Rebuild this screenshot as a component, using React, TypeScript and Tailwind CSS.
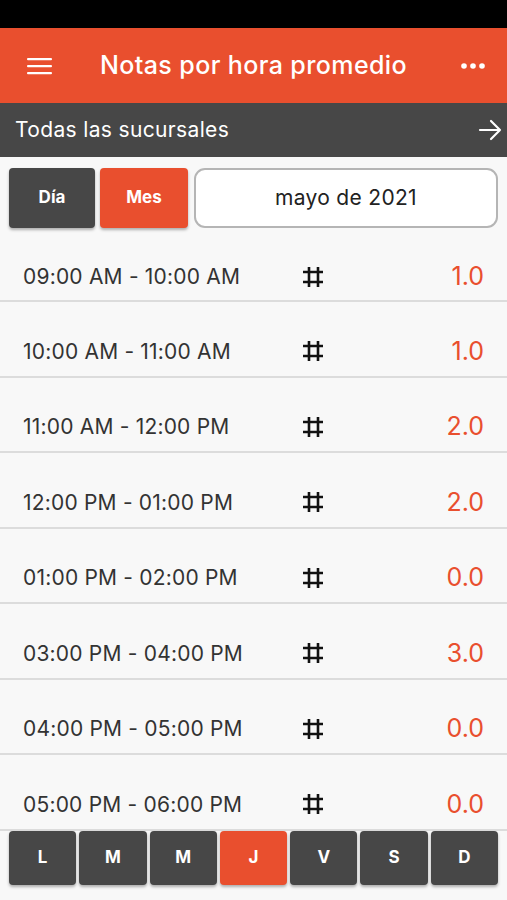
import { ReactNode } from 'react'

const rows = [
  { hora: '09:00 AM - 10:00 AM', valor: '1.0' },
  { hora: '10:00 AM - 11:00 AM', valor: '1.0' },
  { hora: '11:00 AM - 12:00 PM', valor: '2.0' },
  { hora: '12:00 PM - 01:00 PM', valor: '2.0' },
  { hora: '01:00 PM - 02:00 PM', valor: '0.0' },
  { hora: '03:00 PM - 04:00 PM', valor: '3.0' },
  { hora: '04:00 PM - 05:00 PM', valor: '0.0' },
  { hora: '05:00 PM - 06:00 PM', valor: '0.0' },
]

const dias = ['L', 'M', 'M', 'J', 'V', 'S', 'D']

function Hash() {
  return (
    <svg width="22" height="22" viewBox="0 0 22 22" fill="none" stroke="#111" strokeWidth="2.6">
      <path d="M7 1v20M16 1v20M1 6h20M1 16h20" />
    </svg>
  )
}

function Btn({ active, children, className }: { active?: boolean; children: ReactNode; className?: string }) {
  return (
    <button
      className={`flex items-center justify-center rounded-[4px] text-white font-bold shadow-[0_2px_3px_rgba(0,0,0,0.3)] ${
        active ? 'bg-[#e94f2e]' : 'bg-[#474747]'
      } ${className}`}
    >
      {children}
    </button>
  )
}

export default function App() {
  return (
    <div className="h-[900px] w-[507px] flex flex-col bg-[#f8f8f8] overflow-hidden font-['Inter',sans-serif]">
      <div className="h-[28px] bg-black shrink-0" />

      <div className="h-[75px] bg-[#e94f2e] flex items-center px-[27px] shrink-0">
        <svg width="25" height="18" viewBox="0 0 25 18" fill="#fff">
          <rect x="0" y="1" width="25" height="2.2" rx="1" />
          <rect x="0" y="8" width="25" height="2.2" rx="1" />
          <rect x="0" y="15" width="25" height="2.2" rx="1" />
        </svg>
        <h1 className="flex-1 text-center text-white text-[25px] font-medium tracking-[0.4px] pr-[5px]">
          Notas por hora promedio
        </h1>
        <svg width="26" height="8" viewBox="0 0 26 8" fill="#fff" className="mr-[-6px]">
          <circle cx="4" cy="4" r="2.8" />
          <circle cx="13" cy="4" r="2.8" />
          <circle cx="22" cy="4" r="2.8" />
        </svg>
      </div>

      <div className="h-[54px] bg-[#474747] flex items-center justify-between pl-[15px] pr-[5px] shrink-0">
        <span className="text-white text-[21px] tracking-[0.35px]">Todas las sucursales</span>
        <svg width="24" height="22" viewBox="0 0 24 22" fill="none" stroke="#fff" strokeWidth="2.2" strokeLinecap="round" strokeLinejoin="round">
          <path d="M2 11h20M13 2l9 9-9 9" />
        </svg>
      </div>

      <div className="flex gap-[5px] px-[9px] pt-[11px] shrink-0">
        <Btn className="w-[86px] h-[60px] text-[17px]">Día</Btn>
        <Btn active className="w-[88px] h-[60px] text-[17px]">Mes</Btn>
        <div className="flex-1 h-[60px] ml-[1px] rounded-[11px] border-2 border-[#b5b5b5] bg-white flex items-center justify-center text-[21px] tracking-[0.3px] text-[#222]">
          mayo de 2021
        </div>
      </div>

      <div className="flex-1 overflow-hidden">
        {rows.map((r, i) => (
          <div
            key={i}
            className={`flex items-center pt-[25px] border-b-2 border-[#dcdcdc] box-border ${i === 0 ? 'h-[74px]' : 'h-[75.5px]'}`}
          >
            <span className="w-[302px] pl-[23px] text-[21px] text-[#333] tracking-[0.2px]">{r.hora}</span>
            <Hash />
            <span className="flex-1 text-right pr-[23px] text-[25px] text-[#e94f2e]">{r.valor}</span>
          </div>
        ))}
      </div>

      <div className="flex gap-[3px] px-[9px] pb-[15px] shrink-0">
        {dias.map((d, i) => (
          <Btn key={i} active={d === 'J'} className="flex-1 h-[54px] text-[17px]">
            {d}
          </Btn>
        ))}
      </div>
    </div>
  )
}
